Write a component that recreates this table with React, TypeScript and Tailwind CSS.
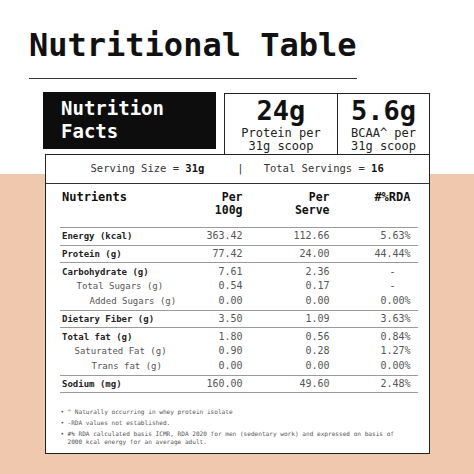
type Row = { label: string; a: string; b: string; c: string; sub?: string };

const sections: Row[][] = [
  [{ label: 'Energy (kcal)', a: '363.42', b: '112.66', c: '5.63%' }],
  [{ label: 'Protein (g)', a: '77.42', b: '24.00', c: '44.44%' }],
  [
    { label: 'Carbohydrate (g)', a: '7.61', b: '2.36', c: '-' },
    { label: 'Total Sugars (g)', a: '0.54', b: '0.17', c: '-', sub: 'pl-[17px]' },
    { label: 'Added Sugars (g)', a: '0.00', b: '0.00', c: '0.00%', sub: 'pl-[30px]' },
  ],
  [{ label: 'Dietary Fiber (g)', a: '3.50', b: '1.09', c: '3.63%' }],
  [
    { label: 'Total fat (g)', a: '1.80', b: '0.56', c: '0.84%' },
    { label: 'Saturated Fat (g)', a: '0.90', b: '0.28', c: '1.27%', sub: 'pl-[15px]' },
    { label: 'Trans fat (g)', a: '0.00', b: '0.00', c: '0.00%', sub: 'pl-[32px]' },
  ],
  [{ label: 'Sodium (mg)', a: '160.00', b: '49.60', c: '2.48%' }],
];

const grid = 'grid grid-cols-[123px_60px_87px_81px] pr-[7px]';

function DataRow({ row }: { row: Row }) {
  return (
    <div className={`${grid} text-[10px] leading-[14.5px] text-[#555]`}>
      {row.sub ? (
        <div className={`${row.sub} text-[9px] text-[#555]`}>{row.label}</div>
      ) : (
        <div className="pl-[2.5px] text-[9px] font-bold text-[#222]">{row.label}</div>
      )}
      <div className="text-right">{row.a}</div>
      <div className="text-right">{row.b}</div>
      <div className={row.c === '-' ? 'pr-[15px] text-right' : 'text-right'}>{row.c}</div>
    </div>
  );
}

export default function App() {
  return (
    <div className="h-[474px] w-[474px] overflow-hidden bg-[linear-gradient(to_bottom,#ffffff_174px,#efc8ad_174px)] font-['DejaVu_Sans_Mono',monospace] text-[#111]">
      <div className="pl-[29px] pt-[29px] text-[32px] font-bold leading-[32px]">Nutritional Table</div>
      <div className="ml-[29px] mt-[16.5px] h-[1.5px] w-[328px] bg-[#333]" />

      <div className="ml-[43px] mt-[12.5px] w-[387px]">
        <div className="flex items-start">
          <div className="h-[57px] w-[173px] bg-[#0d0d0d] pl-[18px] pt-[5.5px] text-[19px] font-bold leading-[23px] text-white">
            <div>Nutrition</div>
            <div>Facts</div>
          </div>
          <div className="ml-[8px] mt-[1px] flex h-[61px] w-[206px] border-x border-t border-[#222] bg-white">
            <div className="w-[113px] border-r border-[#222] pt-[3.5px] text-center">
              <div className="text-[27px] font-bold leading-[27px]">24g</div>
              <div className="mt-[3px] text-[12px] leading-[13px] text-[#222]">
                Protein per
                <br />
                31g scoop
              </div>
            </div>
            <div className="flex-1 pt-[3.5px] text-center">
              <div className="text-[27px] font-bold leading-[27px]">5.6g</div>
              <div className="mt-[3px] text-[12px] leading-[13px] text-[#222]">
                BCAA^ per
                <br />
                31g scoop
              </div>
            </div>
          </div>
        </div>

        <div className="ml-[2px] w-[385px] border-[1.5px] border-[#222] bg-white">
          <div className="flex h-[29px] items-center border-b border-[#333] pl-[44.5px] text-[10.5px] text-[#333]">
            <span>
              Serving Size = <b className="text-[#111]">31g</b>
            </span>
            <span className="ml-[33px] mr-[20px]">|</span>
            <span>
              Total Servings = <b className="text-[#111]">16</b>
            </span>
          </div>

          <div className="ml-[13.5px] w-[358px]">
            <div className={`${grid} pb-[9.5px] pt-[7px] text-[11.5px] font-bold leading-[13.5px] text-[#111]`}>
              <div className="pl-[2.5px] text-[12px]">Nutrients</div>
              <div className="text-right">
                Per
                <br />
                100g
              </div>
              <div className="text-right">
                Per
                <br />
                Serve
              </div>
              <div className="text-right text-[12px]">#%RDA</div>
            </div>

            {sections.map((rows, i) => (
              <div
                key={i}
                className={`border-t border-[#9a9a9a] ${rows.length > 1 ? 'py-[1.5px]' : 'py-[1px]'}`}
              >
                {rows.map((r) => (
                  <DataRow key={r.label} row={r} />
                ))}
              </div>
            ))}
            <div className="border-t border-[#9a9a9a]" />

            <ul className="mt-[15px] space-y-[3.5px] pb-[8px] text-[6.1px] leading-[7.5px] text-[#555]">
              <li className="flex">
                <span className="w-[8px] pl-[1px]">•</span>
                <span>^ Naturally occurring in whey protein isolate</span>
              </li>
              <li className="flex">
                <span className="w-[8px] pl-[1px]">•</span>
                <span>-RDA values not established.</span>
              </li>
              <li className="flex">
                <span className="w-[8px] pl-[1px]">•</span>
                <span>
                  #% RDA calculated basis ICMR, RDA 2020 for men (sedentary work) and expressed on basis of
                  <br />
                  2000 kcal energy for an average adult.
                </span>
              </li>
            </ul>
          </div>
        </div>
      </div>
    </div>
  );
}
